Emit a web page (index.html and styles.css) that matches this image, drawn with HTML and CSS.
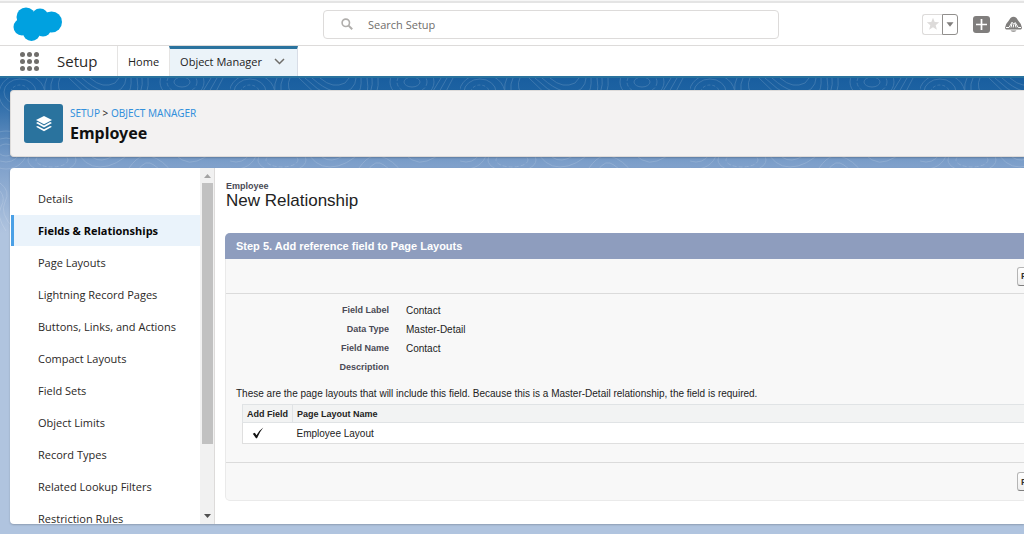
FILE: index.html
```html
<!DOCTYPE html>
<html lang="en">
<head>
<meta charset="utf-8">
<title>Employee | Object Manager</title>
<link rel="stylesheet" href="styles.css">
</head>
<body>
<header class="topbar">
  <a class="logo" href="#" aria-label="Salesforce home">
    <svg width="50" height="35" viewBox="0 0 50 35" fill="#00a1e0" aria-hidden="true"><circle cx="13" cy="10" r="9.5"/><circle cx="27" cy="10" r="8.5"/><circle cx="38.500" cy="15" r="10.500"/><circle cx="9" cy="20" r="8.500"/><circle cx="18.500" cy="25.500" r="8.500"/><circle cx="30" cy="21.500" r="8"/><path d="M10 10h28v12H10z"/></svg>
  </a>
  <label class="search">
    <svg width="12" height="12" viewBox="0 0 12 12" fill="none" stroke="#b0aeac" stroke-width="1.600" aria-hidden="true"><circle cx="4.800" cy="4.800" r="3.700"/><path d="M7.600 7.600l3.600 3.600" stroke-width="2"/></svg>
    <input type="search" placeholder="Search Setup" aria-label="Search Setup">
  </label>
  <div class="actions">
    <div class="favorites">
      <button class="star" type="button" aria-label="Favorite"><svg width="14" height="14" viewBox="0 0 14 14" fill="#dddbda"><path d="M7 .8l1.700 4.300 4.500.2-3.500 2.900 1.200 4.600L7 10.200l-3.900 2.600 1.200-4.600L.8 5.300l4.500-.2z"/></svg></button>
      <button class="caret" type="button" aria-label="Favorites list"><svg width="8" height="5" viewBox="0 0 8 5" fill="#807e7c"><path d="M.5.3h7L4 4.700z"/></svg></button>
    </div>
    <button class="plain" type="button" aria-label="Global actions"><svg width="17" height="17" viewBox="0 0 17 17"><rect width="17" height="17" rx="3" fill="#807e7d"/><path d="M8.500 3v11M3 8.500h11" stroke="#fff" stroke-width="1.700"/></svg></button>
    <button class="plain" type="button" aria-label="Guidance center"><svg width="17" height="17" viewBox="0 0 17 17"><path d="M5.500 2Q8.500-.3 11.500 2l2 3q4 4 3.300 7.500-.3 1-1.300 1H1.500q-1 0-1.300-1Q-.5 9 3.500 5z" fill="#807e7d"/><path d="M5.500 14.500h6q-1 1.300-3 1.300t-3-1.300z" fill="#807e7d"/><path d="M1 11.500h3l3-5.300 1.700 2 1.500-1.700 3 5H16M7 7.500l-1 4M8.700 8.500l-.5 3M10 7.500l1 4" fill="none" stroke="#fff" stroke-width="1"/></svg></button>
  </div>
</header>
<nav class="navbar" aria-label="Setup">
  <button class="waffle" type="button" aria-label="App launcher"><i></i><i></i><i></i><i></i><i></i><i></i><i></i><i></i><i></i></button>
  <span class="app">Setup</span>
  <a class="tab" href="#">Home</a>
  <a class="tab current" href="#">Object Manager
    <svg width="11" height="7" viewBox="0 0 11 7" fill="none" stroke="#706e6b" stroke-width="1.500" aria-hidden="true"><path d="M1 1l4.500 4.500L10 1"/></svg>
  </a>
</nav>
<div class="stage">
  <svg class="contours" aria-hidden="true">
    <defs><pattern id="topo" width="230" height="160" patternUnits="userSpaceOnUse"><g fill="none" stroke="#fff">
      <ellipse cx="20" cy="14" rx="9" ry="7" stroke-dasharray="3 2"/><ellipse cx="20" cy="14" rx="16" ry="13"/><ellipse cx="22" cy="16" rx="23" ry="20"/>
      <path d="M47 0q-6 12 3 24t-4 36M53 0q-6 12 4 26t-4 36M60 0q-5 9 5 22t-6 38M69 0q12 13 27 23t36 2q8-7 5-25M75 0q12 12 25 18t27-1q5-6 4-17M82 0q11 10 21 13t18-2q5-5 5-11M90 0q7 6 13 7t12-2l4-5M142 0q2 13-9 25t-24 22M148 0q2 15-10 29t-22 24"/>
      <ellipse cx="182" cy="4" rx="8" ry="5"/><ellipse cx="182" cy="4" rx="15" ry="11" stroke-dasharray="4 2"/><ellipse cx="182" cy="4" rx="22" ry="17"/><path d="M211 0l-16 26M217 0l-16 28M223 0l-15 29"/>
      <ellipse cx="6" cy="72" rx="14" ry="12"/><ellipse cx="6" cy="72" rx="8" ry="6"/><ellipse cx="6" cy="72" rx="21" ry="19"/><ellipse cx="52" cy="82" rx="24" ry="12"/><ellipse cx="52" cy="82" rx="16" ry="7" stroke-dasharray="4 2"/>
      <path d="M75 70q9 19 25 19t33-17M83 69q9 14 19 13t20-12M122 102q14-28 28-24t23 18M132 102q10-20 18-17t16 15M166 66q16 23 31 17t26-18M174 66q13 16 22 11t18-12M0 105q11 8 5 19t9 27M0 113q6 7 1 16t5 24"/>
    </g></pattern></defs>
    <rect width="100%" height="100%" fill="url(#topo)"/>
  </svg>
  <section class="page-head">
    <div class="badge"><svg width="18" height="18" viewBox="0 0 18 18" fill="#fff" aria-hidden="true"><path d="M9 1l8 4-8 4.300L1 5z"/><path d="M1 8l1.800-.9L9 10.400l6.200-3.300L17 8l-8 4.500zM1 11.800l1.800-.9L9 14.200l6.200-3.300 1.800.9-8 4.500z"/></svg></div>
    <div>
      <p class="crumbs"><a href="#">SETUP</a> &gt; <a href="#">OBJECT MANAGER</a></p>
      <h1>Employee</h1>
    </div>
  </section>
  <div class="panel">
    <aside class="side">
      <ul class="menu">
        <li><a href="#">Details</a></li>
        <li><a class="active" href="#">Fields &amp; Relationships</a></li>
        <li><a href="#">Page Layouts</a></li>
        <li><a href="#">Lightning Record Pages</a></li>
        <li><a href="#">Buttons, Links, and Actions</a></li>
        <li><a href="#">Compact Layouts</a></li>
        <li><a href="#">Field Sets</a></li>
        <li><a href="#">Object Limits</a></li>
        <li><a href="#">Record Types</a></li>
        <li><a href="#">Related Lookup Filters</a></li>
        <li><a href="#">Restriction Rules</a></li>
      </ul>
      <div class="scrollbar" aria-hidden="true">
        <svg width="15" height="15" viewBox="0 0 15 15" fill="#a3a3a3"><path d="M4 10h7L7.500 6z"/></svg>
        <div class="track"><div class="thumb"></div></div>
        <svg width="15" height="15" viewBox="0 0 15 15" fill="#505050"><path d="M4 5h7L7.500 9z"/></svg>
      </div>
    </aside>
    <main class="content">
      <p class="kicker">Employee</p>
      <h2>New Relationship</h2>
      <section class="wizard">
        <h3>Step 5. Add reference field to Page Layouts</h3>
        <div class="button-row"><button class="btn" type="button">Previous</button></div>
        <div class="wizard-body">
          <dl class="facts">
            <dt>Field Label</dt><dd>Contact</dd>
            <dt>Data Type</dt><dd>Master-Detail</dd>
            <dt>Field Name</dt><dd>Contact</dd>
            <dt>Description</dt><dd></dd>
          </dl>
          <p class="note">These are the page layouts that will include this field. Because this is a Master-Detail relationship, the field is required.</p>
          <table class="layouts">
            <thead><tr><th class="add" scope="col">Add Field</th><th scope="col">Page Layout Name</th></tr></thead>
            <tbody><tr><td class="tick"><svg width="12" height="12" viewBox="0 0 12 12" role="img" aria-label="Checked"><path d="M.8 6.800l2-1 1.700 2.400Q7 3.500 11.300.5 7.500 5 5 11.300H4z" fill="#111"/></svg></td><td>Employee Layout</td></tr></tbody>
          </table>
        </div>
        <div class="button-row last"><button class="btn" type="button">Previous</button></div>
      </section>
    </main>
  </div>
</div>
</body>
</html>
```
FILE: styles.css
```css
* { box-sizing: border-box; }
body {
  margin: 0;
  height: 100vh;
  display: flex;
  flex-direction: column;
  overflow: hidden;
  background: #fff;
  color: #2b2826;
  font-family: "Open Sans", "Noto Sans", sans-serif;
  font-size: 11px;
}
h1, h2, h3, p, ul, dl, dd { margin: 0; padding: 0; }
a { color: inherit; text-decoration: none; }
button { padding: 0; font: inherit; }
svg { display: block; }

.topbar {
  display: grid;
  grid-template-columns: 310px minmax(0, 456px) 1fr;
  align-items: center;
  height: 46px;
  padding: 2px 2px 0 13px;
  border-top: 1px solid #f6f6f6;
  border-bottom: 1px solid #dddbda;
  box-shadow: inset 0 2px #e4e4e4;
}
.search {
  display: flex;
  align-items: center;
  gap: 15px;
  height: 29px;
  padding: 0 17px;
  border: 1px solid #dddbda;
  border-radius: 4px;
}
.search input {
  flex: 1;
  min-width: 0;
  padding: 0;
  border: 0;
  outline: 0;
  background: none;
  font: inherit;
}
.search input::placeholder { color: #706e6b; opacity: 1; }
.actions { display: flex; align-items: center; justify-content: flex-end; gap: 15px; }
.favorites { display: flex; }
.star, .caret {
  display: grid;
  place-items: center;
  height: 21px;
  background: #fff;
  border: 1px solid #dddbda;
}
.star { width: 20px; border-right: 0; border-radius: 3px 0 0 3px; }
.caret { width: 16px; border-color: #918f8d; border-radius: 0 3px 3px 0; }
.plain { border: 0; background: none; }

.navbar {
  display: flex;
  height: 32px;
  border-bottom: 2px solid #2a739e;
}
.waffle {
  display: grid;
  grid-template-columns: repeat(3, 5px);
  gap: 2px;
  align-content: center;
  padding: 0;
  margin: 0 18px 0 20px;
  border: 0;
  background: none;
}
.waffle i { width: 5px; height: 5px; border-radius: 50%; background: #706e6b; }
.app { width: 60px; font-size: 15px; line-height: 31px; }
.tab {
  display: flex;
  align-items: center;
  gap: 12px;
  padding: 0 10px;
  border-left: 1px solid #e5e4e3;
  color: #222;
}
.tab.current {
  padding: 0 12px 3px 10px;
  border-top: 3px solid #2a739e;
  border-right: 1px solid #d8dde6;
  background: #ebf3f9;
}

.stage {
  position: relative;
  flex: 1;
  min-height: 0;
  display: flex;
  flex-direction: column;
  gap: 11px;
  padding: 12px 0 10px 10px;
  background: linear-gradient(#195e9f 0, #1d62a2 12px, #7d9fca 85px, #b0c4df 155px);
}
.contours {
  position: absolute;
  inset: 0;
  width: 100%;
  height: 160px;
  opacity: .15;
}
.page-head, .panel { position: relative; background: #fff; box-shadow: 0 1px 2px #0003; }
.page-head {
  display: flex;
  align-items: center;
  gap: 7px;
  height: 67px;
  padding: 0 13px;
  border: 1px solid #dddbda;
  border-right: 0;
  border-radius: 4px 0 0 4px;
  background: #f3f2f2;
}
.badge {
  display: grid;
  place-items: center;
  width: 39px;
  height: 39px;
  border-radius: 3px;
  background: #2a739e;
}
.crumbs { padding-top: 1px; line-height: 17px; font-family: "Noto Sans", sans-serif; font-size: 10px; }
.crumbs a { color: #3290dc; }
h1 { font-family: "Noto Sans", sans-serif; font-size: 16px; line-height: 22px; color: #111; }

.panel {
  flex: 1;
  min-height: 0;
  display: flex;
  overflow: hidden;
  border-radius: 4px 0 0 4px;
}
.side { display: flex; flex: none; width: 205px; border-right: 1px solid #dddbda; }
.menu { flex: 1; padding-top: 15px; list-style: none; overflow: hidden; }
.menu a {
  display: block;
  height: 31px;
  margin: 0 0 1px 1px;
  padding-left: 27px;
  line-height: 31px;
}
.menu .active {
  padding-left: 24px;
  border-left: 3px solid #4aa0e6;
  background: #eaf3fb;
  color: #080707;
  font-weight: 700;
}
.scrollbar { display: flex; flex-direction: column; width: 14px; background: #f1f1f1; }
.track { flex: 1; padding: 0 1px 0 2px; }
.thumb { height: 80%; background: #c1c1c1; }

.content {
  flex: 1;
  min-width: 0;
  padding: 13px 0 0 11px;
  font-family: "Liberation Sans", Arial, sans-serif;
  font-size: 10px;
  color: #222;
}
.kicker { font-size: 9px; line-height: 10px; font-weight: 700; color: #4a4a56; }
h2 { font-size: 17px; line-height: 20px; font-weight: 400; }
.wizard {
  margin: 22px -68px 0 -1px;
  border: 1px solid #eaeaea;
  border-top: 0;
  border-radius: 5px;
  background: #f8f8f8;
}
h3 {
  margin: 0 -1px;
  padding: 0 11px;
  border-radius: 5px 5px 0 0;
  background: #8e9dbe;
  color: #fff;
  font-size: 11px;
  line-height: 26px;
}
.button-row {
  display: flex;
  align-items: center;
  justify-content: flex-end;
  height: 35px;
  padding: 0 10px;
  border-bottom: 1px solid #dbdbdb;
}
.button-row.last { height: 38px; border-top: 1px solid #dbdbdb; border-bottom: 0; }
.btn {
  width: 64px;
  height: 19px;
  border: 1px solid #b5b5b5;
  border-bottom-color: #7f7f7f;
  border-radius: 3px;
  background: linear-gradient(#fff, #eee);
  color: #333;
  font-size: 9px;
  font-weight: 700;
  text-align: left;
  padding-left: 3px;
}
.wizard-body { padding: 7px 16px 18px; }
.facts {
  display: grid;
  grid-template-columns: 147px 1fr;
  column-gap: 17px;
  grid-auto-rows: 19px;
  line-height: 19px;
}
.facts dt { text-align: right; font-size: 9px; font-weight: 700; color: #4a4a56; }
.note { margin: 9px 0 3px -6px; line-height: 15px; }
.layouts {
  width: 100%;
  border: 1px solid #dfdfdf;
  border-collapse: collapse;
  background: #fff;
}
.layouts th, .layouts td { padding: 0 4px; text-align: left; }
.layouts th { height: 18px; background: #f2f3f3; border: 1px solid #e0e3e5; font-size: 9px; }
.layouts td { height: 21px; }
.layouts .add { width: 50px; white-space: nowrap; }
.layouts .tick { padding-left: 9px; }
```
